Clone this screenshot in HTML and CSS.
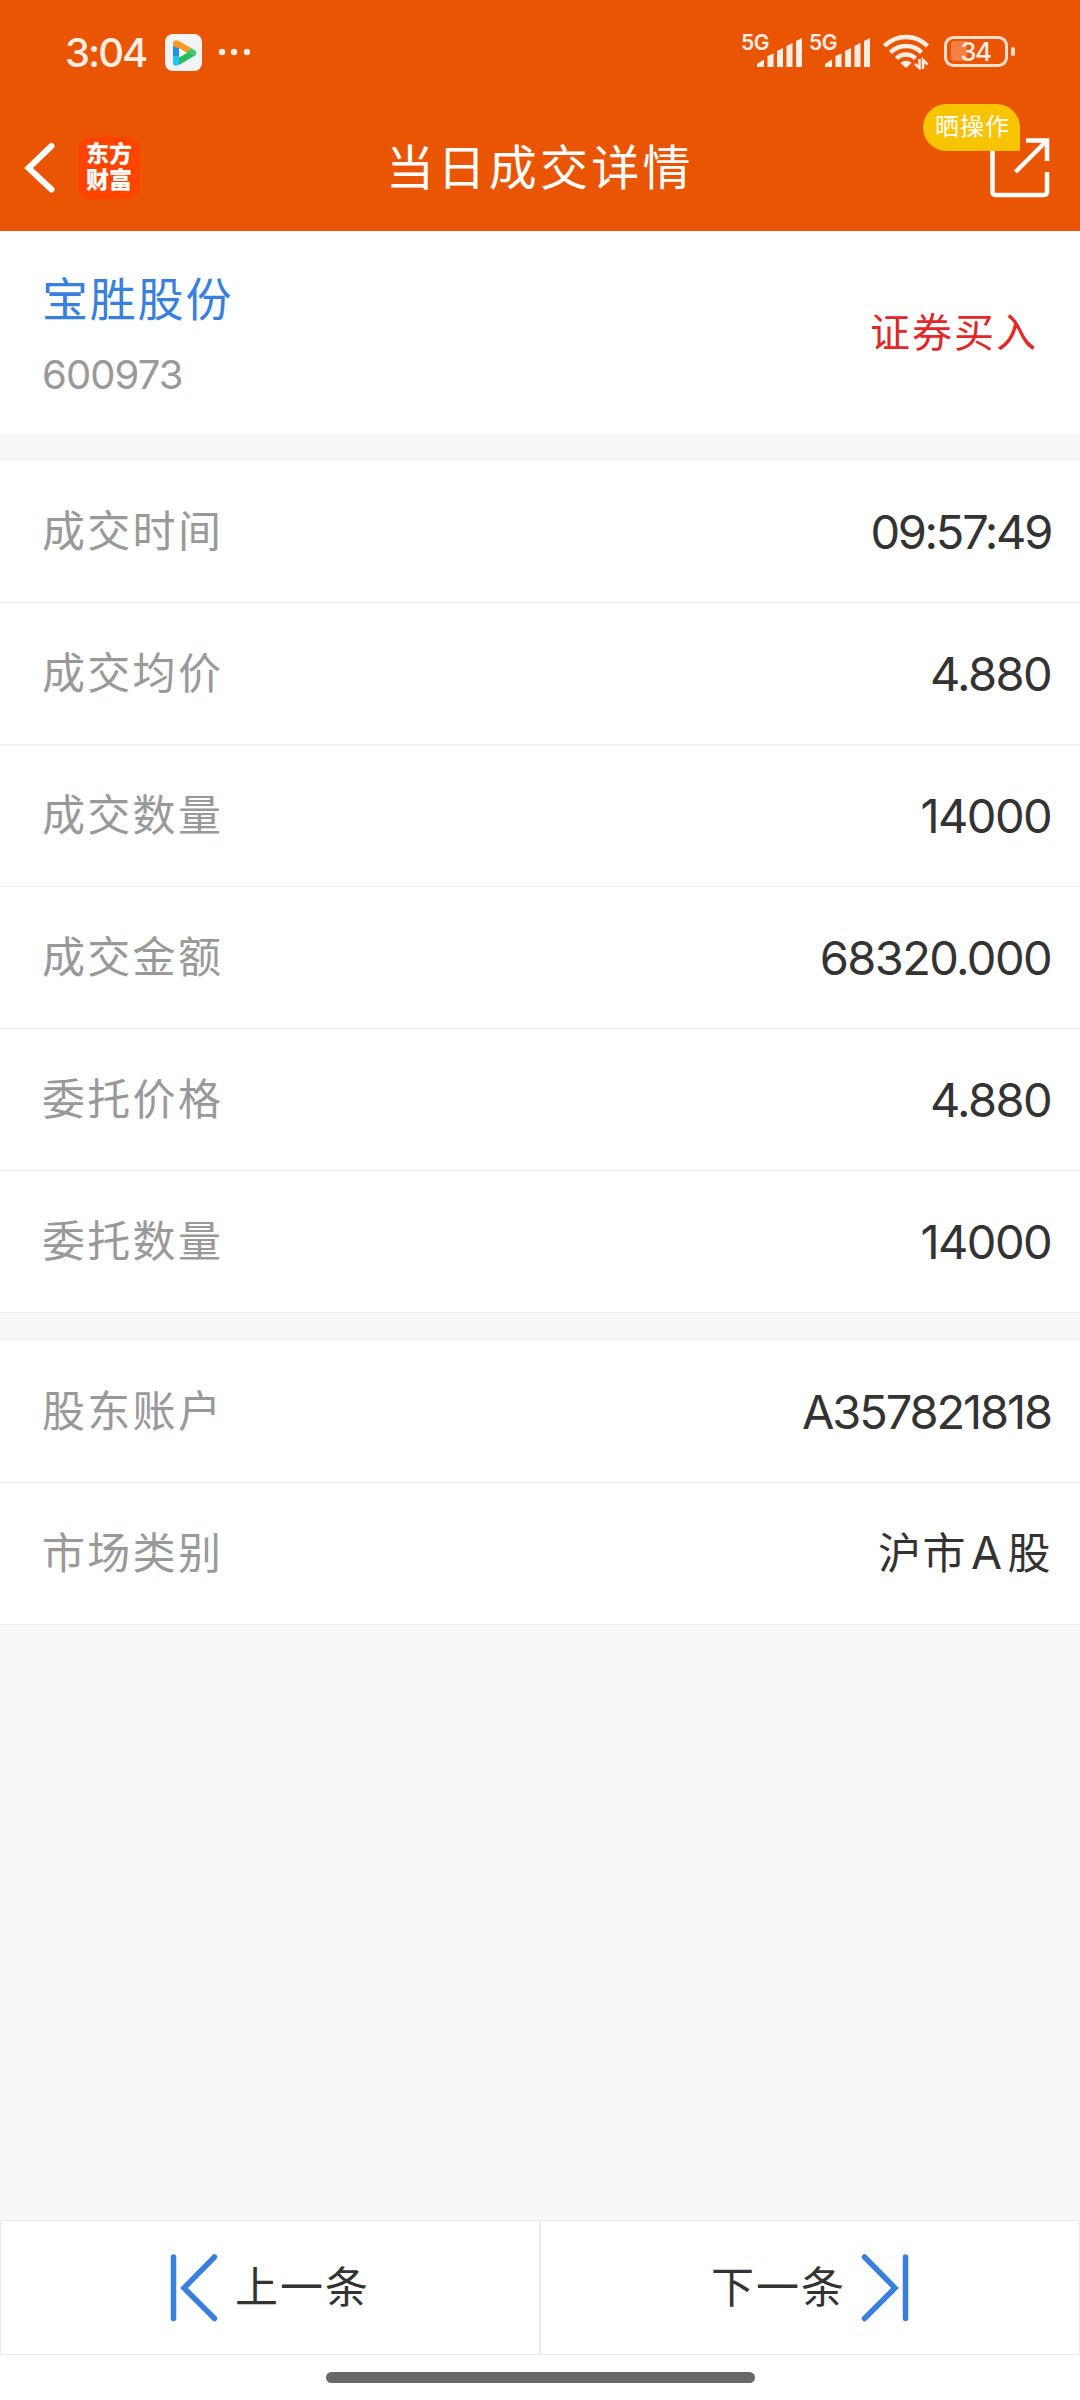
FILE: index.html
```html
<!DOCTYPE html>
<html lang="zh-CN">
<head>
    <meta charset="UTF-8">
    <meta name="viewport" content="width=device-width, initial-scale=1.0">
    <title>当日成交详情</title>
    <link rel="stylesheet" href="styles.css">
</head>
<body>
    <!-- Header -->
    <header class="header">
        <div class="status-bar">
            <span class="clock">3:04</span>
            <svg class="app-icon" width="37" height="37" viewBox="0 0 37 37">
                <rect width="37" height="37" rx="8" fill="#f1f3f5"/>
                <path d="M14 31L30 21.500Q32 19.500 30 17.500L22 15L20 18.500L14 23Z" fill="#27bd5c"/>
                <path d="M8 10H14V28.500A3 3 0 0 1 8 28.500Z" fill="#1593f0"/>
                <path d="M8 22H14V28.500A3 3 0 0 1 8 28.500Z" fill="#22c5fa"/>
                <path d="M8 12V8.500Q9 5.500 13 6.500L26 14L22 19L14 14.500Z" fill="#f79a26"/>
                <path d="M26 14L30 16.500Q32.500 19 30 21.500L22 19Z" fill="#42c973"/>
                <path d="M14 14.500L22 19L14 23.500Z" fill="#fff"/>
            </svg>
            <svg class="dots" width="32" height="8" viewBox="0 0 32 8">
                <circle cx="4" cy="4" r="3.200"/>
                <circle cx="16" cy="4" r="3.200"/>
                <circle cx="29" cy="4" r="3.200"/>
            </svg>
            <div class="status-right">
                <div class="signal">
                    <span class="net">5G</span>
                    <svg class="bars" width="45" height="30" viewBox="0 0 45 30">
                        <path d="M0 29V26L6 22H7V29ZM10.500 29V18L16.500 15.500V29ZM20 29V13L26 10V29ZM29.500 29V8L35.500 5V29ZM39 29V3L45 0V29Z"/>
                    </svg>
                </div>
                <div class="signal">
                    <span class="net">5G</span>
                    <svg class="bars" width="45" height="30" viewBox="0 0 45 30">
                        <path d="M0 29V26L6 22H7V29ZM10.500 29V18L16.500 15.500V29ZM20 29V13L26 10V29ZM29.500 29V8L35.500 5V29ZM39 29V3L45 0V29Z"/>
                    </svg>
                </div>
                <svg class="wifi" width="46" height="36" viewBox="0 0 46 36">
                    <g fill="none" stroke="#ffeee3" stroke-width="4.500">
                        <path d="M1.500 12A30 30 0 0 1 44.500 12"/>
                        <path d="M7.500 18.500A22 22 0 0 1 38.500 18.500"/>
                        <path d="M13.500 24.500A13.500 13.500 0 0 1 32.500 24.500"/>
                    </g>
                    <path d="M23 34L17.500 29A8 8 0 0 1 28.500 29Z" fill="#ffeee3"/>
                    <path d="M36.500 25V34L32 30M40 35V26L44.500 30.500" fill="none" stroke="#ffeee3" stroke-width="2.500"/>
                </svg>
                <svg class="battery" width="72" height="32" viewBox="0 0 72 32">
                    <rect x="1.500" y="1.500" width="61" height="28" rx="8" fill="none" stroke="#ffe0cc" stroke-width="3"/>
                    <path d="M11 5H23V25H11A4 4 0 0 1 7 21V9A4 4 0 0 1 11 5Z" fill="#f28042"/>
                    <rect x="67" y="11" width="4" height="9" rx="2" fill="#ffe0cc"/>
                    <text class="battery-text" x="31.500" y="25" text-anchor="middle">34</text>
                </svg>
            </div>
        </div>

        <div class="nav">
            <svg class="back" width="32" height="52" viewBox="0 0 32 52">
                <path d="M27.500 4L4.500 26L27.500 47.500" fill="none" stroke="#fff" stroke-width="6" stroke-linecap="round"/>
            </svg>
            <div class="logo">东方<br>财富</div>
            <h1 class="title">当日成交详情</h1>
            <div class="share">
                <svg width="60" height="60" viewBox="0 0 60 60">
                    <g fill="none" stroke="#fff" stroke-width="4.500">
                        <path d="M2.500 10V54.500A2.500 2.500 0 0 0 5 57H54.500A2.500 2.500 0 0 0 57 54.500V34"/>
                        <path d="M36 2.500H57V23"/>
                        <path d="M25.500 34L56.500 3"/>
                    </g>
                </svg>
                <span class="badge">晒操作</span>
            </div>
        </div>
    </header>

    <!-- Stock -->
    <section class="stock">
        <div>
            <div class="stock-name">宝胜股份</div>
            <div class="stock-code">600973</div>
        </div>
        <div class="direction">证券买入</div>
    </section>

    <!-- Deal details -->
    <section class="list">
        <div class="row"><span class="label">成交时间</span><span class="value time">09:57:49</span></div>
        <div class="row"><span class="label">成交均价</span><span class="value">4.880</span></div>
        <div class="row"><span class="label">成交数量</span><span class="value">14000</span></div>
        <div class="row"><span class="label">成交金额</span><span class="value">68320.000</span></div>
        <div class="row"><span class="label">委托价格</span><span class="value">4.880</span></div>
        <div class="row"><span class="label">委托数量</span><span class="value">14000</span></div>
    </section>

    <!-- Account -->
    <section class="list">
        <div class="row"><span class="label">股东账户</span><span class="value account">A357821818</span></div>
        <div class="row"><span class="label">市场类别</span><span class="value market">沪市<span class="latin">A</span>股</span></div>
    </section>

    <!-- Prev / next -->
    <footer class="footer">
        <div class="pager">
            <div class="page-btn">
                <svg width="48" height="68" viewBox="0 0 48 68">
                    <path d="M3.500 3V64.500M44.500 3L14 34L44.500 64.500"/>
                </svg>
                <span>上一条</span>
            </div>
            <div class="page-btn next">
                <span>下一条</span>
                <svg width="48" height="68" viewBox="0 0 48 68">
                    <path d="M44.500 3V64.500M3.500 3L34 34L3.500 64.500"/>
                </svg>
            </div>
        </div>
        <div class="home-bar"></div>
    </footer>
</body>
</html>
```
FILE: styles.css
```css
* {
    box-sizing: border-box;
}
body {
    margin: 0;
    min-height: 2400px;
    display: flex;
    flex-direction: column;
    background: #f6f8fa;
    color: #333;
    font-family: Inter, "Noto Sans CJK SC", sans-serif;
}

/* header */
.header {
    height: 231px;
    background: #ea5504;
    color: #fff;
}
.status-bar {
    height: 104px;
    padding: 0 64px 0 65px;
    display: flex;
    align-items: center;
    color: #ffeee3;
    fill: #ffeee3;
}
.clock {
    width: 100px;
    font-size: 40px;
    font-weight: 500;
    letter-spacing: -2px;
}
.dots {
    margin-left: 16px;
}
.status-right {
    margin-left: auto;
    display: flex;
    align-items: center;
}
.signal {
    width: 68px;
    height: 36px;
    display: flex;
    align-items: flex-start;
}
.net {
    width: 28px;
    font-size: 21px;
    font-weight: 600;
    line-height: 17px;
    letter-spacing: -0.5px;
}
.bars {
    flex: none;
    margin: 4px 0 0 -12px;
}
.wifi {
    margin-left: 6px;
}
.battery {
    margin-left: 15px;
}
.battery-text {
    font-size: 26px;
    font-weight: 500;
    letter-spacing: -1.5px;
}
.nav {
    position: relative;
    height: 127px;
    padding: 0 30px 0 24px;
    display: flex;
    align-items: center;
}
.logo {
    width: 62px;
    height: 62px;
    margin-left: 22px;
    padding: 4px 0 0 8px;
    border-radius: 13px;
    background: #ff4400;
    font-size: 23px;
    font-weight: 900;
    line-height: 26px;
}
.title {
    flex: 1;
    margin: 0 78px 0 28px;
    padding-bottom: 7px;
    text-align: center;
    font-size: 48px;
    font-weight: 400;
    letter-spacing: 3.3px;
}
.share {
    position: relative;
    width: 60px;
    height: 60px;
}
.badge {
    position: absolute;
    right: 30px;
    top: -34px;
    width: 97px;
    height: 47px;
    padding-left: 12px;
    border-radius: 24px 24px 0 24px;
    background: #f8c300;
    font-size: 24px;
    line-height: 46px;
    letter-spacing: 1px;
    white-space: nowrap;
}

/* stock */
.stock {
    height: 202px;
    padding: 4px 42px 0;
    display: flex;
    align-items: center;
    justify-content: space-between;
    background: #fff;
}
.stock-name {
    font-size: 46px;
    line-height: 70px;
    letter-spacing: 1.8px;
    color: #3880dc;
}
.stock-code {
    margin-top: 11px;
    font-size: 40px;
    line-height: 60px;
    letter-spacing: -0.9px;
    color: #999;
}
.direction {
    padding-bottom: 8px;
    font-size: 40px;
    letter-spacing: 2px;
    color: #e02828;
}

/* rows */
.list {
    margin-top: 28px;
    background: #fff;
}
.row {
    height: 142px;
    padding: 0 28px 0 42px;
    display: flex;
    align-items: center;
    justify-content: space-between;
    border-bottom: 1px solid #ededed;
}
.label {
    padding-bottom: 8px;
    font-size: 43px;
    letter-spacing: 2.3px;
    color: #999;
}
.value {
    padding: 0 1px 1px 0;
    font-size: 47px;
    letter-spacing: -1.6px;
}
.time {
    letter-spacing: -2.3px;
}
.account {
    letter-spacing: -2.1px;
}
.market {
    padding: 0 0 8px;
    font-size: 43px;
    letter-spacing: 1.5px;
}
.latin {
    margin: 0 4px;
    font-size: 45px;
}

/* footer */
.footer {
    height: 180px;
    margin-top: auto;
    background: #fff;
}
.pager {
    display: flex;
}
.page-btn {
    flex: 1;
    height: 135px;
    display: flex;
    align-items: center;
    justify-content: center;
    gap: 17px;
    border: 1px solid #ebebeb;
    font-size: 43px;
    letter-spacing: 2px;
}
.page-btn.next {
    gap: 15px;
}
.page-btn span {
    padding-bottom: 7px;
}
.page-btn path {
    fill: none;
    stroke: #3880dc;
    stroke-width: 5.5;
    stroke-linecap: round;
}
.home-bar {
    width: 429px;
    height: 11px;
    margin: 17px auto 0;
    border-radius: 6px;
    background: #696969;
}
```
